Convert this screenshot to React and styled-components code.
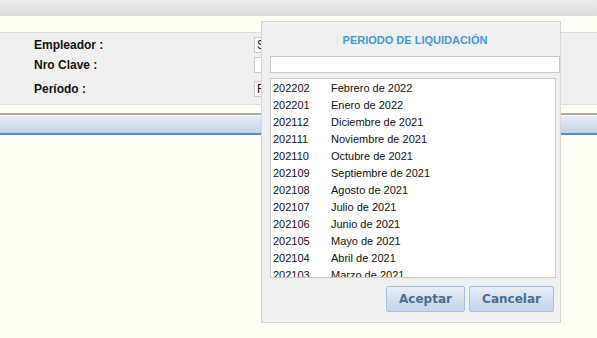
import React from "react";
import styled, { createGlobalStyle } from "styled-components";

const GlobalStyle = createGlobalStyle`
  html, body {
    margin: 0;
    padding: 0;
    background: #fffff5;
    font-family: "Liberation Sans", Tahoma, sans-serif;
  }
`;

const Page = styled.div`
  position: relative;
  width: 597px;
  height: 338px;
  overflow: hidden;
  background: #fffff5;
`;

const TopBar = styled.div`
  height: 16px;
  background: linear-gradient(#ececec, #dcdcdc);
`;

const FormPanel = styled.div`
  margin-top: 16px;
  height: 73px;
  background: #f0f0f0;
  border-top: 1px solid #dcdcdc;
  border-bottom: 1px solid #dcdcdc;
  padding: 4px 0 0 34px;
  box-sizing: border-box;
  display: grid;
  grid-template-columns: 220px 200px;
  grid-auto-rows: min-content;
  row-gap: 4px;
`;

const Label = styled.div`
  font-size: 12px;
  font-weight: bold;
  color: #111;
  height: 16px;
  line-height: 16px;
  margin-top: ${({ $gap }) => $gap || 0}px;
`;

const Field = styled.div`
  height: 14px;
  border: 1px solid #ccc;
  background: #fff;
  font-size: 12px;
  line-height: 14px;
  padding-left: 2px;
  color: #111;
  margin-top: ${({ $gap }) => $gap || 0}px;
`;

const GridBar = styled.div`
  margin-top: 8px;
  border-top: 2px solid #a8a8a8;
  border-bottom: 2px solid #4f8fc4;
  height: 18px;
  background: linear-gradient(#e6eef7, #c4d4e5);
  box-shadow: inset 0 1px 0 #fff;
`;

const Dialog = styled.div`
  position: absolute;
  left: 261px;
  top: 21px;
  width: 290px;
  height: 300px;
  background: #f0f0f0;
  border: 1px solid #d8d8d8;
  display: flex;
  flex-direction: column;
  padding: 0 0 0 8px;
`;

const Title = styled.div`
  height: 34px;
  line-height: 36px;
  text-align: center;
  font-size: 11px;
  font-weight: bold;
  color: #3d9ad6;
`;

const Search = styled.div`
  width: 288px;
  height: 15px;
  border: 1px solid #c8c8c8;
  background: #fff;
`;

const List = styled.div`
  margin-top: 5px;
  width: 286px;
  height: 200px;
  border: 1px solid #c8c8c8;
  background: #fff;
  overflow: hidden;
  padding-top: 1px;
  box-sizing: border-box;
`;

const Row = styled.div`
  display: flex;
  height: 17px;
  line-height: 17px;
  font-size: 11px;
  color: #111;
`;

const Code = styled.span`
  width: 58px;
  padding-left: 2px;
`;

const Actions = styled.div`
  display: flex;
  justify-content: flex-end;
  gap: 4px;
  margin-top: 8px;
  padding-right: 6px;
`;

const Button = styled.button`
  width: ${({ $w }) => $w}px;
  height: 26px;
  border: 1px solid #a8c0d8;
  border-radius: 2px;
  background: linear-gradient(#e5eef8, #c2d4e6);
  color: #4a6d91;
  font-family: "DejaVu Sans", Tahoma, sans-serif;
  font-size: 12px;
  font-weight: bold;
  padding: 0;
`;

const periods = [
  ["202202", "Febrero de 2022"],
  ["202201", "Enero de 2022"],
  ["202112", "Diciembre de 2021"],
  ["202111", "Noviembre de 2021"],
  ["202110", "Octubre de 2021"],
  ["202109", "Septiembre de 2021"],
  ["202108", "Agosto de 2021"],
  ["202107", "Julio de 2021"],
  ["202106", "Junio de 2021"],
  ["202105", "Mayo de 2021"],
  ["202104", "Abril de 2021"],
  ["202103", "Marzo de 2021"],
];

export default function App() {
  return (
    <Page>
      <GlobalStyle />
      <TopBar />
      <FormPanel>
        <Label>Empleador :</Label>
        <Field>S</Field>
        <Label>Nro Clave :</Label>
        <Field />
        <Label $gap={4}>Período :</Label>
        <Field $gap={4}>F</Field>
      </FormPanel>
      <GridBar />
      <Dialog>
        <Title>PERIODO DE LIQUIDACIÓN</Title>
        <Search />
        <List>
          {periods.map(([code, name]) => (
            <Row key={code}>
              <Code>{code}</Code>
              <span>{name}</span>
            </Row>
          ))}
        </List>
        <Actions>
          <Button $w={79}>Aceptar</Button>
          <Button $w={85}>Cancelar</Button>
        </Actions>
      </Dialog>
    </Page>
  );
}
